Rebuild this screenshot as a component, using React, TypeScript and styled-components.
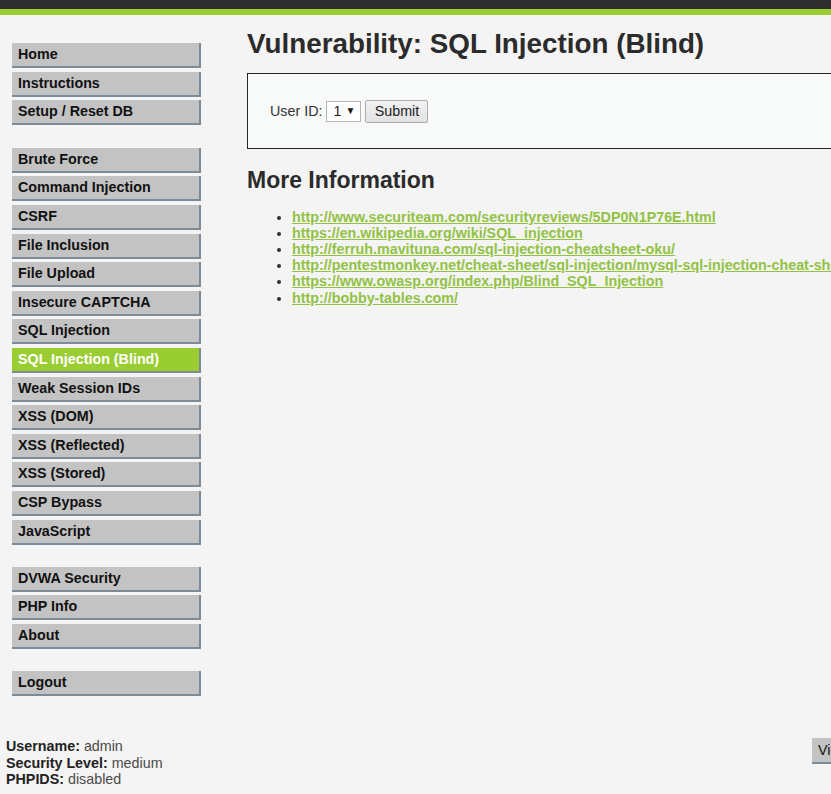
import React from "react";
import styled, { createGlobalStyle } from "styled-components";

const GlobalStyle = createGlobalStyle`
  html, body {
    margin: 0;
    padding: 0;
    background: #f4f4f4;
    overflow: hidden;
  }
  body {
    font-family: "Liberation Sans", Arial, Helvetica, sans-serif;
    font-size: 14.3px;
    color: #2f2f2f;
  }
`;

const Page = styled.div`
  width: 1000px;
`;

const Header = styled.div`
  height: 9px;
  background: #2e2e2e;
  border-bottom: 6px solid #9acd32;
`;

const Body = styled.div`
  display: flex;
  align-items: flex-start;
`;

const Sidebar = styled.nav`
  width: 247px;
  flex: none;
  box-sizing: border-box;
  padding: 28.3px 0 0 12px;
  display: flex;
  flex-direction: column;
  gap: 22.3px;
`;

const MenuGroup = styled.ul`
  list-style: none;
  margin: 0;
  padding: 0;
  display: flex;
  flex-direction: column;
  gap: 3.6px;
`;

const MenuItem = styled.li<{ $selected?: boolean }>`
  width: 189px;
  box-sizing: border-box;
  height: 25px;
  padding: 3px 6px;
  line-height: 17px;
  font-size: 14.3px;
  font-weight: bold;
  color: ${(p) => (p.$selected ? "#ffffff" : "#111111")};
  background: ${(p) => (p.$selected ? "#9acd32" : "#c3c3c3")};
  border-right: 2px solid #7d8b98;
  border-bottom: 2px solid #7d8b98;
  white-space: nowrap;
`;

const Main = styled.main`
  flex: 1;
  min-width: 0;
  padding-top: 12.6px;
`;

const Title = styled.h1`
  margin: 0;
  font-size: 27.8px;
  line-height: 32px;
  font-weight: bold;
  color: #2b2b2b;
  white-space: nowrap;
`;

const FormBox = styled.div`
  margin-top: 13.7px;
  background: #f8f9f9;
  border: 1px solid #262626;
  padding: 25px 22px;
  display: flex;
  align-items: center;
  height: 24px;
`;

const Label = styled.label`
  font-size: 14.3px;
  color: #333;
  margin-right: 4px;
`;

const SelectWrap = styled.span`
  position: relative;
  display: inline-block;
  margin-right: 4px;
`;

const Select = styled.select`
  appearance: none;
  -webkit-appearance: none;
  width: 35px;
  height: 21px;
  box-sizing: border-box;
  padding: 0 0 0 6px;
  border: 1px solid #b5b5b5;
  border-radius: 0;
  background: #ffffff;
  font-family: "Liberation Sans", Arial, sans-serif;
  font-size: 14.3px;
  color: #222;
  display: block;
`;

const SelectArrow = styled.span`
  position: absolute;
  right: 6px;
  top: 4px;
  font-size: 10px;
  line-height: 12px;
  color: #1a1a1a;
  pointer-events: none;
`;

const SubmitButton = styled.button`
  height: 23px;
  width: 63px;
  box-sizing: border-box;
  padding: 0;
  border: 1px solid #adadad;
  border-radius: 2px;
  background: linear-gradient(#f2f2f2, #e2e2e2);
  font-family: "Liberation Sans", Arial, sans-serif;
  font-size: 14.3px;
  color: #222;
`;

const SubTitle = styled.h2`
  margin: 18px 0 0;
  font-size: 23px;
  line-height: 26px;
  font-weight: bold;
  color: #2b2b2b;
`;

const LinkList = styled.ul`
  margin: 15.3px 0 0;
  padding-left: 45px;
  list-style: disc;
  line-height: 16.2px;
  font-size: 14.3px;
  color: #2f2f2f;
`;

const Link = styled.a`
  color: #92c244;
  font-weight: bold;
  text-decoration: underline;
  white-space: nowrap;
`;

const Footer = styled.div`
  display: flex;
  align-items: flex-start;
  margin-top: 42px;
  padding-left: 6px;
`;

const SystemInfo = styled.div`
  width: 806px;
  flex: none;
  font-size: 14.3px;
  line-height: 16.4px;
  color: #4a4a4a;
`;

const InfoLabel = styled.span`
  font-weight: bold;
  color: #222;
`;

const FooterButtons = styled.div`
  display: flex;
  gap: 6px;
`;

const GreyButton = styled.button`
  height: 26px;
  box-sizing: border-box;
  padding: 4px 6px 3px;
  line-height: 17px;
  border: none;
  border-right: 2px solid #7d8b98;
  border-bottom: 2px solid #7d8b98;
  background: #c3c3c3;
  font-family: "Liberation Sans", Arial, sans-serif;
  font-size: 14.3px;
  color: #111;
  white-space: nowrap;
`;

const menuGroups: string[][] = [
  ["Home", "Instructions", "Setup / Reset DB"],
  [
    "Brute Force",
    "Command Injection",
    "CSRF",
    "File Inclusion",
    "File Upload",
    "Insecure CAPTCHA",
    "SQL Injection",
    "SQL Injection (Blind)",
    "Weak Session IDs",
    "XSS (DOM)",
    "XSS (Reflected)",
    "XSS (Stored)",
    "CSP Bypass",
    "JavaScript",
  ],
  ["DVWA Security", "PHP Info", "About"],
  ["Logout"],
];

const links = [
  "http://www.securiteam.com/securityreviews/5DP0N1P76E.html",
  "https://en.wikipedia.org/wiki/SQL_injection",
  "http://ferruh.mavituna.com/sql-injection-cheatsheet-oku/",
  "http://pentestmonkey.net/cheat-sheet/sql-injection/mysql-sql-injection-cheat-sheet",
  "https://www.owasp.org/index.php/Blind_SQL_Injection",
  "http://bobby-tables.com/",
];

export default function App() {
  return (
    <>
      <GlobalStyle />
      <Page>
        <Header />
        <Body>
          <Sidebar>
            {menuGroups.map((group, gi) => (
              <MenuGroup key={gi}>
                {group.map((item) => (
                  <MenuItem key={item} $selected={item === "SQL Injection (Blind)"}>
                    {item}
                  </MenuItem>
                ))}
              </MenuGroup>
            ))}
          </Sidebar>
          <Main>
            <Title>Vulnerability: SQL Injection (Blind)</Title>
            <FormBox>
              <Label>User ID:</Label>
              <SelectWrap>
                <Select defaultValue="1">
                  <option value="1">1</option>
                  <option value="2">2</option>
                  <option value="3">3</option>
                  <option value="4">4</option>
                  <option value="5">5</option>
                </Select>
                <SelectArrow>▼</SelectArrow>
              </SelectWrap>
              <SubmitButton type="button">Submit</SubmitButton>
            </FormBox>
            <SubTitle>More Information</SubTitle>
            <LinkList>
              {links.map((l) => (
                <li key={l}>
                  <Link href="#">{l}</Link>
                </li>
              ))}
            </LinkList>
          </Main>
        </Body>
        <Footer>
          <SystemInfo>
            <div>
              <InfoLabel>Username:</InfoLabel> admin
            </div>
            <div>
              <InfoLabel>Security Level:</InfoLabel> medium
            </div>
            <div>
              <InfoLabel>PHPIDS:</InfoLabel> disabled
            </div>
          </SystemInfo>
          <FooterButtons>
            <GreyButton type="button">View Source</GreyButton>
            <GreyButton type="button">View Help</GreyButton>
          </FooterButtons>
        </Footer>
      </Page>
    </>
  );
}
